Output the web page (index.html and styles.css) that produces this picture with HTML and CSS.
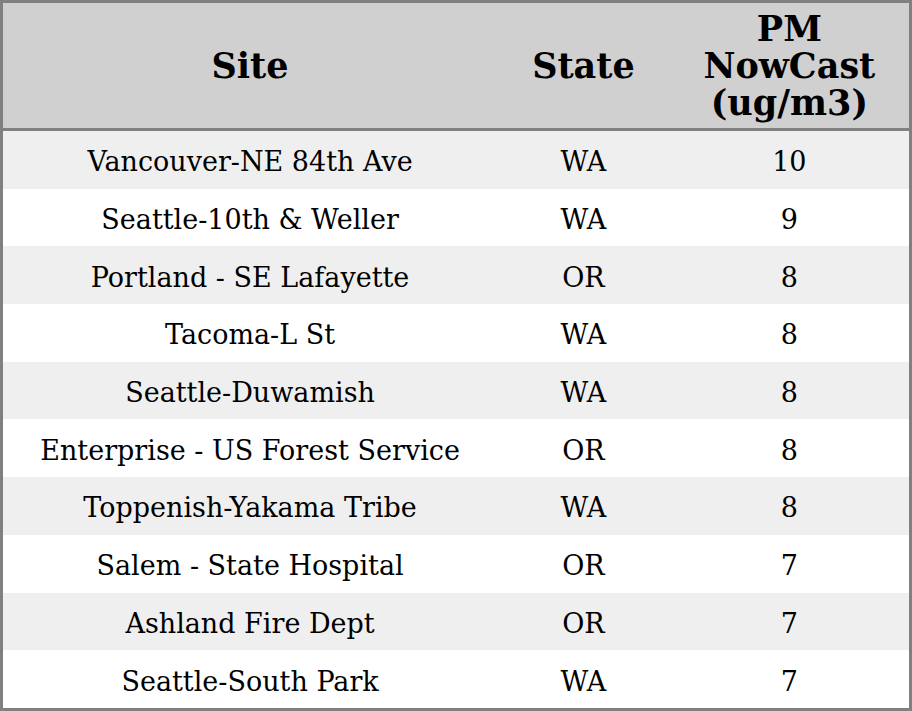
FILE: index.html
```html
<!DOCTYPE html>
<html>
<head>
<meta charset="utf-8">
<link rel="stylesheet" href="styles.css">
</head>
<body>
<table class="aq">
  <colgroup>
    <col class="c-site">
    <col class="c-state">
    <col class="c-pm">
  </colgroup>
  <thead>
    <tr><th>Site</th><th>State</th><th>PM<br>NowCast<br>(ug/m3)</th></tr>
  </thead>
  <tbody>
    <tr><td>Vancouver-NE 84th Ave</td><td>WA</td><td>10</td></tr>
    <tr><td>Seattle-10th &amp; Weller</td><td>WA</td><td>9</td></tr>
    <tr><td>Portland - SE Lafayette</td><td>OR</td><td>8</td></tr>
    <tr><td>Tacoma-L St</td><td>WA</td><td>8</td></tr>
    <tr><td>Seattle-Duwamish</td><td>WA</td><td>8</td></tr>
    <tr><td>Enterprise - US Forest Service</td><td>OR</td><td>8</td></tr>
    <tr><td>Toppenish-Yakama Tribe</td><td>WA</td><td>8</td></tr>
    <tr><td>Salem - State Hospital</td><td>OR</td><td>7</td></tr>
    <tr><td>Ashland Fire Dept</td><td>OR</td><td>7</td></tr>
    <tr><td>Seattle-South Park</td><td>WA</td><td>7</td></tr>
  </tbody>
</table>
</body>
</html>
```

FILE: styles.css
```css
html, body {
  margin: 0;
  padding: 0;
  background: #ffffff;
}
.aq {
  width: 912px;
  border-collapse: collapse;
  border: 3px solid #808080;
  font-family: "DejaVu Serif", serif;
  color: #000;
  table-layout: fixed;
}
.c-site { width: 494px; }
.c-state { width: 172px; }
.c-pm { width: 240px; }
.aq th {
  background: #d0d0d0;
  font-size: 35px;
  font-weight: bold;
  line-height: 37px;
  height: 125px;
  padding: 0;
  text-align: center;
  vertical-align: middle;
  border-bottom: 3px solid #808080;
}
.aq td {
  font-size: 27px;
  height: 53.7px;
  padding: 4px 0 0 0;
  text-align: center;
  vertical-align: middle;
}
.aq tbody tr:nth-child(odd) td { background: #efefef; }
.aq tbody tr:nth-child(even) td { background: #ffffff; }
```
